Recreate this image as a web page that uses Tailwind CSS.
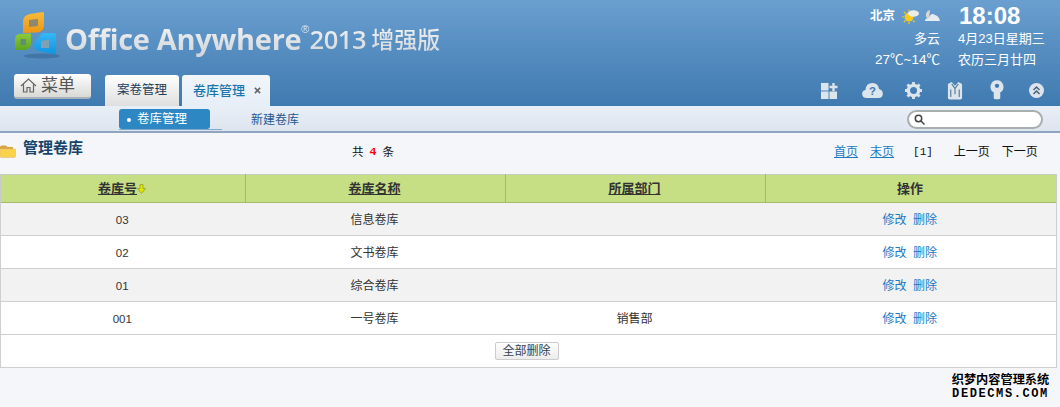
<!DOCTYPE html>
<html lang="zh">
<head>
<meta charset="utf-8">
<script src="https://cdn.jsdelivr.net/npm/@tailwindcss/browser@4"></script>
</head>
<body class="w-[1060px] h-[407px] overflow-hidden relative bg-[#f4f6f9] text-[12px] font-['Liberation_Sans','Noto_Sans_CJK_SC',sans-serif] text-[#333]">

<header class="h-[106px] bg-linear-to-b from-[#6a9fd0] to-[#3f7ab0] flex flex-col">
  <div class="h-[73px] flex justify-between">
    <div class="flex pl-[14px] pt-[12px]">
      <svg width="46" height="50" viewBox="0 0 46 50" class="shrink-0">
        <defs>
          <linearGradient id="lgo" x1="0" y1="0" x2="0" y2="1"><stop offset="0" stop-color="#f8bb3a"/><stop offset="1" stop-color="#ee9612"/></linearGradient>
          <linearGradient id="lgg" x1="0" y1="0" x2="0" y2="1"><stop offset="0" stop-color="#8fcb3a"/><stop offset="1" stop-color="#5fa520"/></linearGradient>
          <linearGradient id="lgb" x1="0" y1="0" x2="0" y2="1"><stop offset="0" stop-color="#35b8f5"/><stop offset="1" stop-color="#0f94e0"/></linearGradient>
        </defs>
        <ellipse cx="28" cy="44" rx="18" ry="2.500" fill="#2f5f8f" opacity=".5"/>
        <path d="M9 10 Q9 3 16 2 L29 0 Q30 0 30 2 L30 13 Q30 20 23 20.500 L9 21 Z" fill="url(#lgo)"/>
        <path d="M15 8 L24 7 L24 14 L15 15 Z" fill="#8b8a70"/>
        <path d="M5 22 L17 21.500 L17 31 Q17 38 10 38 L1 38 L1 27 Q1 23 5 22 Z" fill="url(#lgg)"/>
        <path d="M6.500 27 L12 27 L12 33 L6.500 33 Z" fill="#5f8f70"/>
        <path d="M27 22 Q28 21 31 21 L40 21 Q42 21 42 24 L42 40 Q42 43 39 42 L25 39 Q19 37 20 32 Z" fill="url(#lgb)"/>
        <path d="M27 29 L35 27.500 L35 36 L27 36 Z" fill="#7fa0b5"/>
      </svg>
      <div class="flex items-start pl-[5px] pt-[8px] bg-linear-to-b from-white to-[#bfc5cb] bg-clip-text text-transparent">
        <span class="font-['Open_Sans','Noto_Sans_CJK_SC',sans-serif] font-bold text-[29px] leading-[38px] tracking-[-0.3px]">Office Anywhere</span>
        <span class="text-[11px] leading-[14px] pt-[2px]">®</span>
        <span class="font-['Open_Sans','Noto_Sans_CJK_SC',sans-serif] font-semibold text-[25.500px] leading-[38px] tracking-[-0.4px]">2013</span>
        <span class="font-['Noto_Sans_CJK_SC',sans-serif] font-medium text-[23px] leading-[36px] pl-[5px]">增强版</span>
      </div>
    </div>
    <div class="flex text-white pt-[5px] text-[13px]">
      <div class="w-[172px] flex flex-col items-end">
        <div class="h-[22px] flex items-center w-full pl-[94px]">
          <span class="font-bold text-[12.500px] leading-[22px]">北京</span>
          <svg width="17" height="16" viewBox="0 0 17 16" class="ml-[7px]"><circle cx="7" cy="9" r="4.500" fill="#f8c91a"/><g stroke="#f8c91a" stroke-width="1.200"><path d="M7 1.500V3.500M7 16V14M0 9H2M1.800 3.800L3.500 5.500M1.800 14.200L3.500 12.500M12.500 14L11 12.500"/></g><ellipse cx="11.500" cy="5.500" rx="5.500" ry="3.200" fill="#ecece6"/></svg>
          <svg width="16" height="14" viewBox="0 0 16 14" class="ml-[5px]"><path d="M6 1 A5 5 0 0 0 3 9 L5 9 Z" fill="#d8d8d0"/><path d="M1 12 Q1 9 5 9 Q7 3 11 6 Q15 7 16 12 Z" fill="#e6ecef"/></svg>
        </div>
        <div class="h-[22px] pt-[1px] pr-[8px] leading-[22px]">多云</div>
        <div class="h-[22px] pr-[8px] leading-[22px] whitespace-nowrap text-[13.500px]">27℃~14℃</div>
      </div>
      <div class="w-[112px] pl-[10px] flex flex-col whitespace-nowrap">
        <div class="h-[22px] font-bold text-[24px] leading-[22px] pl-[1px]">18:08</div>
        <div class="h-[22px] pt-[1px] leading-[22px]">4月23日星期三</div>
        <div class="h-[22px] leading-[22px]">农历三月廿四</div>
      </div>
    </div>
  </div>
  <div class="h-[33px] flex justify-between">
    <div class="flex">
      <button class="ml-[14px] mt-[1px] w-[77px] h-[25px] rounded-[3px] bg-linear-to-b from-white to-[#d9d9d6] border-b-2 border-[#a9b3bb] flex items-center pl-[6px] gap-[4px] text-[#555] text-[17px] shrink-0">
        <svg width="17" height="17" viewBox="0 0 17 17" fill="none" stroke="#666" stroke-width="1.200"><path d="M1 9 L8.500 2 L16 9 M3.500 7.500 V15 H7 V10.500 H10 V15 H13.500 V7.500"/></svg>
        <span>菜单</span>
      </button>
      <div class="ml-[14px] mt-[2px] w-[74px] h-[31px] rounded-t-[3px] bg-linear-to-b from-white to-[#dfdfdf] flex items-center justify-center text-[#1d3c58] text-[12.500px]">案卷管理</div>
      <div class="ml-[3px] mt-[2px] w-[88px] h-[31px] rounded-t-[3px] bg-linear-to-b from-[#f2f6fb] to-[#e6eef7] flex items-center pl-[11px] gap-[9px] text-[#1a76ad] text-[13px]">
        <span class="font-medium">卷库管理</span>
        <svg width="7" height="7" viewBox="0 0 8 8" stroke="#666" stroke-width="1.800"><path d="M1 1 L7 7 M7 1 L1 7"/></svg>
      </div>
    </div>
    <div class="flex items-center pt-[1px] pr-[16px]">
      <svg width="18" height="17" viewBox="0 0 19 18" class="mr-[24px]"><g fill="#dde5ec"><rect x="1" y="1" width="8" height="8"/><rect x="1" y="10" width="8" height="8"/><rect x="10" y="10" width="8" height="8"/><path d="M13 1H15.500V4H18.500V6.500H15.500V9.500H13V6.500H10V4H13Z"/></g></svg>
      <svg width="21" height="16" viewBox="0 0 22 17" class="mr-[22px]"><path d="M5 17 Q0 17 0 12.500 Q0 9 3.500 8.500 Q4 1 11 1 Q17 1 18 7.500 Q22 8.500 22 12.500 Q22 17 17 17 Z" fill="#dde5ec"/><text x="11" y="14" text-anchor="middle" font-size="12" font-weight="700" fill="#3f7ab0" font-family="Liberation Sans">?</text></svg>
      <svg width="17" height="17" viewBox="0 0 18 18" class="mr-[25px]"><circle cx="9" cy="9" r="5.500" fill="none" stroke="#dde5ec" stroke-width="3.500"/><path d="M9 0V3.500M9 14.500V18M0 9H3.500M14.500 9H18M2.600 2.600L5 5M13 13L15.400 15.400M15.400 2.600L13 5M5 13L2.600 15.400" stroke="#dde5ec" stroke-width="3"/></svg>
      <svg width="16" height="19" viewBox="0 0 17 20" class="mr-[27px]"><path d="M1 3 L5 1 L8.500 5 L12 1 L16 3 L16 18 Q16 19.500 14 19.500 L3 19.500 Q1 19.500 1 18 Z" fill="#dde5ec"/><path d="M5 3 L8.500 8 L12 3 M8.500 8 V14M4 9V17M13 9V17" fill="none" stroke="#54789a" stroke-width="1.200"/></svg>
      <svg width="14" height="20" viewBox="0 0 15 21" class="mr-[25px]"><path d="M7.500 0 A7 7 0 0 1 11 13 V19 Q11 20.500 7.500 20.500 Q4 20.500 4 19 V13 A7 7 0 0 1 7.500 0 Z" fill="#dde5ec"/><circle cx="7.500" cy="6" r="2.300" fill="#3f7ab0"/></svg>
      <svg width="15" height="15" viewBox="0 0 15 15"><circle cx="7.500" cy="7.500" r="7.500" fill="#dde5ec"/><path d="M4.500 7 L7.500 4 L10.500 7 M4.500 11 L7.500 8 L10.500 11" fill="none" stroke="#47617a" stroke-width="1.500"/></svg>
    </div>
  </div>
</header>

<nav class="h-[25px] bg-linear-to-b from-[#e9eff7] to-[#dde5ef] flex justify-between">
  <div class="flex items-start">
    <div class="ml-[119px] mt-[3px] w-[103px] h-[21px] border-b border-[#7fa9c9] shrink-0">
      <div class="w-[91px] h-[20px] rounded-[3px] bg-[#2c87c2] flex items-center pl-[8px] pt-[1px] gap-[6px] text-white text-[12.500px]">
        <span class="w-[4px] h-[4px] rounded-full bg-white"></span>
        <span>卷库管理</span>
      </div>
    </div>
    <span class="ml-[29px] mt-[4px] leading-[20px] text-[#23588f] text-[12px]">新建卷库</span>
  </div>
  <div class="mr-[17px] mt-[4px] w-[136px] h-[19px] rounded-full bg-white border-2 border-[#a9aeb0] flex items-center pl-[5px]">
    <svg width="11" height="11" viewBox="0 0 11 11" fill="none" stroke="#444" stroke-width="1.500"><circle cx="4.500" cy="4.500" r="3.200"/><path d="M7 7 L10.500 10.500"/></svg>
  </div>
</nav>
<div class="h-[2px] bg-[#8ea4c0]"></div>

<main class="flex flex-col">
  <div class="h-[41px] flex text-[#111]">
    <div class="w-[345px] flex items-start pt-[6px]">
      <svg width="16" height="14" viewBox="0 0 16 14" class="mt-[5px]"><path d="M0 3 Q0 1.500 2 1.500 H6 L7.500 3 H13 V5 H0 Z" fill="#d9a441"/><path d="M0 5 H15.500 V12 Q15.500 13.500 14 13.500 H1.500 Q0 13.500 0 12 Z" fill="#fbd34b" stroke="#e0b98c" stroke-width=".6"/></svg>
      <span class="ml-[7px] font-bold text-[15px] leading-[18px] text-[#16456b]">管理卷库</span>
    </div>
    <div class="w-[400px] pt-[11px] pl-[7px] leading-[16px] flex gap-[6px] text-[11.500px]"><span>共</span><span class="text-[#f00] font-bold font-['Liberation_Mono']">4</span><span>条</span></div>
    <div class="flex-1 pt-[11px] pl-[89px] leading-[16px] flex text-[12px] whitespace-nowrap">
      <a class="text-[#1a7ac6] underline">首页</a>
      <a class="ml-[12px] text-[#1a7ac6] underline">末页</a>
      <span class="ml-[19px] font-['Liberation_Mono'] text-[11px]">[1]</span>
      <span class="ml-[21px]">上一页</span>
      <span class="ml-[12px]">下一页</span>
    </div>
  </div>
  <table class="w-[1057px] table-fixed border-collapse text-center text-[12px] leading-[16px]">
    <colgroup><col class="w-[245px]"><col class="w-[260px]"><col class="w-[260px]"><col></colgroup>
    <thead>
      <tr class="h-[28px] bg-[#c6df85] border-t border-t-[#c8cbc6] border-b border-b-[#a3bc68] text-[#333] font-bold text-[13px]">
        <th class="pr-[2px] pt-[1px] border-l border-l-[#c8cbc6] border-r border-r-[#a3bc68]"><span class="underline">卷库号</span><svg width="9" height="10" viewBox="0 0 9 10" class="inline-block align-[-1px]"><path d="M3 0.500H6V4.500H8.500L4.500 9.500L0.500 4.500H3Z" fill="#e3e300" stroke="#8a9a30" stroke-width=".7"/></svg></th>
        <th class="pr-[2px] pt-[1px] border-r border-r-[#a3bc68]"><span class="underline">卷库名称</span></th>
        <th class="pr-[2px] pt-[1px] border-r border-r-[#a3bc68]"><span class="underline">所属部门</span></th>
        <th class="pr-[2px] pt-[1px] border-r border-r-[#c8cbc6]">操作</th>
      </tr>
    </thead>
    <tbody>
      <tr class="h-[33px] bg-[#f2f2f2] border-b border-b-[#cfcfcf] border-x border-x-[#cfcfcf]">
        <td class="pr-[2px] pt-[2px] text-[11.500px]">03</td><td class="pr-[2px] pt-[2px]">信息卷库</td><td></td>
        <td class="pr-[2px] pt-[2px]"><a class="text-[#1a7ac6]">修改</a> <a class="ml-[3px] text-[#1a7ac6]">删除</a></td>
      </tr>
      <tr class="h-[33px] bg-white border-b border-b-[#cfcfcf] border-x border-x-[#cfcfcf]">
        <td class="pr-[2px] pt-[2px] text-[11.500px]">02</td><td class="pr-[2px] pt-[2px]">文书卷库</td><td></td>
        <td class="pr-[2px] pt-[2px]"><a class="text-[#1a7ac6]">修改</a> <a class="ml-[3px] text-[#1a7ac6]">删除</a></td>
      </tr>
      <tr class="h-[33px] bg-[#f2f2f2] border-b border-b-[#cfcfcf] border-x border-x-[#cfcfcf]">
        <td class="pr-[2px] pt-[2px] text-[11.500px]">01</td><td class="pr-[2px] pt-[2px]">综合卷库</td><td></td>
        <td class="pr-[2px] pt-[2px]"><a class="text-[#1a7ac6]">修改</a> <a class="ml-[3px] text-[#1a7ac6]">删除</a></td>
      </tr>
      <tr class="h-[33px] bg-white border-b border-b-[#cfcfcf] border-x border-x-[#cfcfcf]">
        <td class="pr-[2px] pt-[2px] text-[11.500px]">001</td><td class="pr-[2px] pt-[2px]">一号卷库</td><td class="pr-[2px] pt-[2px]">销售部</td>
        <td class="pr-[2px] pt-[2px]"><a class="text-[#1a7ac6]">修改</a> <a class="ml-[3px] text-[#1a7ac6]">删除</a></td>
      </tr>
      <tr class="h-[33px] bg-white border-b border-b-[#cfcfcf] border-x border-x-[#cfcfcf]">
        <td colspan="4" class="pr-[4px]">
          <button class="w-[64px] h-[18px] align-middle rounded-[2px] border border-[#ccc] bg-linear-to-b from-white to-[#ececec] text-[#33424f] text-[12px] leading-[14px]">全部删除</button>
        </td>
      </tr>
    </tbody>
  </table>
</main>

<div class="absolute left-[950px] top-[373px] w-[101px] h-[28px] flex flex-col items-center font-bold text-black leading-[14px] whitespace-nowrap [text-shadow:0_0_2px_#fff,0_0_2px_#fff]">
  <span class="text-[12.200px]">织梦内容管理系统</span>
  <span class="text-[12px] tracking-[1.600px] font-['Liberation_Mono']">DEDECMS.COM</span>
</div>
</body>
</html>
